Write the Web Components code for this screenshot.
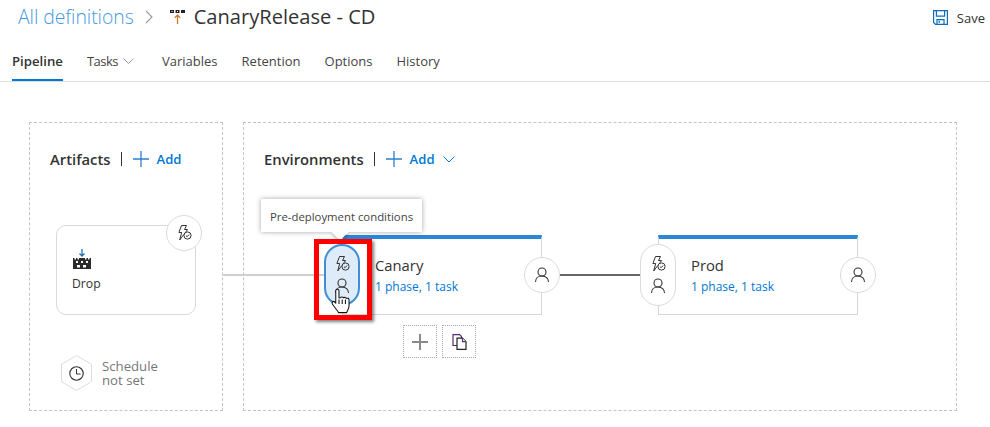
<!DOCTYPE html>
<html>
<head>
<meta charset="utf-8">
<title>CanaryRelease - CD</title>
<style>
  html, body { margin: 0; background: #fff; }
  body { font-family: "Open Sans", "Noto Sans", sans-serif; color: #333; width: 990px; height: 427px; overflow: hidden; }
</style>
</head>
<body>
<release-page></release-page>
<script>
"use strict";
const BOLT = `<svg width="18" height="18" viewBox="0 0 18 18" fill="none" stroke="#333" stroke-width="1"><path d="M6.5 1.5h5l-2 4h3l-1.6 2.4M6.5 1.5l-2.6 7h2.8l-2 7.5 4.2-5.6"/><circle cx="12.5" cy="11.5" r="3.6"/><path d="M10.9 11.6l1.2 1.1 2-2.2"/></svg>`;
const USER = `<svg width="18" height="18" viewBox="0 0 18 18" fill="none" stroke="#333" stroke-width="1.1"><circle cx="9" cy="6" r="4"/><path d="M2.5 16c0-3.6 2.6-6 6.5-6s6.5 2.4 6.5 6"/></svg>`;

class TitleBar extends HTMLElement {
  constructor() {
    super();
    this.attachShadow({ mode: "open" }).innerHTML = `<style>
      :host { display: flex; align-items: center; height: 33px; padding-left: 18px; padding-right: 5px; font-size: 19.4px; font-weight: 300; }
      .crumb { color: #0078d4; opacity: .75; letter-spacing: -.05px; }
      .sep { margin: 0 17px 0 11px; display: flex; }
      .icon { display: flex; margin-right: 9px; }
      .name { color: #333; font-weight: 400; font-size: 20.1px; }
      .save { margin-left: auto; margin-top: 2px; display: flex; align-items: center; gap: 9px; font-size: 13px; font-weight: 400; }
    </style>
    <span class="crumb">All definitions</span>
    <span class="sep"><svg width="8" height="14" viewBox="0 0 8 14" fill="none" stroke="#999" stroke-width="1.1"><path d="M1 1l6 6-6 6"/></svg></span>
    <span class="icon"><svg width="15" height="15" viewBox="0 0 15 15"><path fill="#222" d="M0 1h4v3H0zM5.500 1h4v3h-4zM11 1h4v3h-4z"/><path fill="#fff" d="M1.500 2h1v1h-1zM7 2h1v1H7z"/><path fill="none" stroke="#c8792a" stroke-width="1.3" d="M7.500 15V6.500M4.800 8.800l2.700-2.700 2.700 2.700"/></svg></span>
    <span class="name"><slot></slot></span>
    <span class="save"><svg width="15" height="15" viewBox="0 0 15 15" fill="none" stroke="#0a6ebd" stroke-width="1.2"><path d="M.6.6h13.800v13.800H2.600L.6 12.400z"/><path d="M3.400.6v5.600h8.200V.6M4 14.400V9.600h7v4.800M6.200 10.800v2.200"/></svg>Save</span>`;
  }
}

class TabStrip extends HTMLElement {
  constructor() {
    super();
    this.attachShadow({ mode: "open" }).innerHTML = `<style>
      :host { display: flex; height: 49px; border-bottom: 1px solid #dcdcdc; padding-left: 12px; gap: 24px; font-size: 13px; box-sizing: border-box; }
      .tab { height: 48px; box-sizing: border-box; padding-top: 19px; display: flex; gap: 5px; color: #444; white-space: nowrap; }
      .on { font-weight: 600; font-size: 13.2px; color: #333; border-bottom: 2px solid #0078d4; }
      .tasks { letter-spacing: -.5px; margin-right: 4px; }
      svg { margin-top: 6px; }
    </style>
    <span class="tab on">Pipeline</span>
    <span class="tab tasks">Tasks<svg width="11" height="6" viewBox="0 0 11 6" fill="none" stroke="#999"><path d="M.5.5l5 5 5-5"/></svg></span>
    <span class="tab">Variables</span>
    <span class="tab">Retention</span>
    <span class="tab">Options</span>
    <span class="tab">History</span>`;
  }
}

class StagePanel extends HTMLElement {
  constructor() {
    super();
    const label = this.getAttribute("label");
    const chevron = this.hasAttribute("menu")
      ? `<svg class="chev" width="12" height="7" viewBox="0 0 12 7" fill="none" stroke="#0078d4"><path d="M.5.5L6 6l5.500-5.500"/></svg>` : "";
    this.attachShadow({ mode: "open" }).innerHTML = `<style>
      :host { display: block; border: 1px dashed #c4c4c4; box-sizing: border-box; padding: 26px 20px 0; }
      .head { display: flex; align-items: center; height: 20px; font-size: 14.8px; font-weight: 600; color: #333; }
      .bar { width: 1px; height: 14px; background: #333; margin: 0 11px 0 10px; }
      .add { color: #0078d4; margin-left: 8px; font-size: 13.1px; }
      .chev { margin-left: 8px; }
    </style>
    <div class="head">
      <span>${label}</span><span class="bar"></span>
      <svg width="16" height="16" viewBox="0 0 16 16" stroke="#2d7fd3" stroke-width="1.3"><path d="M0 8h16M8 0v16"/></svg>
      <span class="add">Add</span>${chevron}
    </div>`;
  }
}

class RoundButton extends HTMLElement {
  constructor() {
    super();
    this.attachShadow({ mode: "open" }).innerHTML = `<style>
      :host { display: flex; align-items: center; justify-content: center; width: 36px; height: 36px; box-sizing: border-box; border: 1px solid #dadada; border-radius: 50%; background: #fff; }
    </style><slot></slot>`;
  }
}

class ConditionPill extends HTMLElement {
  constructor() {
    super();
    this.attachShadow({ mode: "open" }).innerHTML = `<style>
      :host { display: flex; flex-direction: column; align-items: center; justify-content: center; gap: 4px; width: 36px; height: 62px; box-sizing: border-box; border: 1px solid #dadada; border-radius: 18px; background: #fff; }
      :host([active]) { border: 2px solid #3f8fd6; background: #deecf9; }
      div { height: 18px; }
    </style><div>${BOLT}</div><div>${USER}</div>`;
  }
}

class EnvCard extends HTMLElement {
  constructor() {
    super();
    this.attachShadow({ mode: "open" }).innerHTML = `<style>
      :host { display: block; position: absolute; width: 200px; height: 80px; box-sizing: border-box; border: 1px solid #d6d6d6; border-top: 4px solid #2b88d8; background: #fff; padding: 16px 0 0 32px; }
      .name { font-size: 14.8px; color: #333; line-height: 20px; }
      .link { font-size: 12px; color: #0078d4; line-height: 20px; margin-top: 2px; }
      condition-pill { position: absolute; left: -19px; top: 5px; }
      round-button { position: absolute; right: -19px; top: 18px; }
    </style>
    <condition-pill ${this.hasAttribute("active") ? "active" : ""}></condition-pill>
    <div class="name"><slot></slot></div>
    <div class="link">1 phase, 1 task</div>
    <round-button>${USER}</round-button>`;
  }
}

class ArtifactCard extends HTMLElement {
  constructor() {
    super();
    this.attachShadow({ mode: "open" }).innerHTML = `<style>
      :host { display: block; position: absolute; width: 140px; height: 90px; box-sizing: border-box; border: 1px solid #d9d9d9; border-radius: 10px; background: #fff; padding: 23px 0 0 15px; }
      .icon { display: block; height: 20px; margin-left: 1px; }
      .name { font-size: 12.2px; color: #333; margin-top: 6px; line-height: 18px; }
      round-button { position: absolute; right: -7px; top: -11px; }
    </style>
    <svg class="icon" width="18" height="20" viewBox="0 0 18 20"><path fill="none" stroke="#1f6fb5" stroke-width="1.3" d="M9 0v6.500M6.500 4.500L9 7l2.500-2.500"/><path fill="#2b2b2b" d="M0 9h1.500v1.500H3V9h1.500v1.500H6V9h6v1.500h1.500V9H15v1.500h1.500V9H18v11H0z"/><path fill="#fff" d="M3 12h2v2H3zM8 12h2v2H8zM13 12h2v2h-2zM4 16h3v2.500H4zM10 16h3v2.500h-3z"/></svg>
    <div class="name"><slot></slot></div>
    <round-button>${BOLT}</round-button>`;
  }
}

class ScheduleBadge extends HTMLElement {
  constructor() {
    super();
    this.attachShadow({ mode: "open" }).innerHTML = `<style>
      :host { display: flex; align-items: center; gap: 10px; position: absolute; font-size: 13.2px; line-height: 14px; color: #777; }
      svg { display: block; }
    </style>
    <svg width="31" height="36" viewBox="0 0 31 36" fill="none"><path stroke="#dcdcdc" d="M15.500.600l15 8.700v17.400l-15 8.700-15-8.700V9.300z"/><circle cx="15.500" cy="18.500" r="6.700" stroke="#333" stroke-width="1.100"/><path stroke="#333" d="M15.500 14v5h4"/></svg>
    <span><slot></slot></span>`;
  }
}

class ToolTip extends HTMLElement {
  constructor() {
    super();
    this.attachShadow({ mode: "open" }).innerHTML = `<style>
      :host { display: block; position: absolute; height: 33px; box-sizing: border-box; padding: 0 9px; background: #fff; font-size: 11.350px; line-height: 35px; color: #444; box-shadow: 0 0 5px rgba(0,0,0,.35); white-space: nowrap; }
      .beak { position: absolute; left: 73px; top: 27px; width: 12px; height: 12px; background: #fff; transform: rotate(45deg); box-shadow: 2px 2px 3px rgba(0,0,0,.2); }
      .text { position: relative; }
    </style><span class="beak"></span><span class="text"><slot></slot></span>`;
  }
}

class ActionTile extends HTMLElement {
  constructor() {
    super();
    this.attachShadow({ mode: "open" }).innerHTML = `<style>
      :host { display: flex; align-items: center; justify-content: center; width: 34px; height: 33px; box-sizing: border-box; border: 1px dotted #aaa; }
    </style><slot></slot>`;
  }
}

class PipelineCanvas extends HTMLElement {
  constructor() {
    super();
    this.attachShadow({ mode: "open" }).innerHTML = `<style>
      :host { display: grid; grid-template-columns: 194px 714px; column-gap: 20px; position: relative; padding: 40px 33px 0 29px; height: 289px; }
      .line { position: absolute; height: 2px; }
      .tiles { position: absolute; left: 403px; top: 243px; display: flex; gap: 5px; }
      .mark { position: absolute; left: 314px; top: 157px; width: 58px; height: 81px; box-sizing: border-box; border: 5px solid #f00; box-shadow: 2px 2px 3px rgba(0,0,0,.5); }
      .hand { position: absolute; left: 331px; top: 206px; }
    </style>
    <stage-panel label="Artifacts"></stage-panel>
    <stage-panel label="Environments" menu></stage-panel>

    <span class="line" style="left:222px;top:192px;width:110px;background:#cfcfcf"></span>
    <span class="line" style="left:560px;top:192px;width:82px;background:#666"></span>

    <artifact-card style="left:56px;top:143px">Drop</artifact-card>
    <schedule-badge style="left:61px;top:273px">Schedule<br>not set</schedule-badge>

    <env-card active style="left:342px;top:153px">Canary</env-card>
    <env-card style="left:658px;top:153px">Prod</env-card>

    <tool-tip style="left:261px;top:117px">Pre-deployment conditions</tool-tip>

    <div class="tiles">
      <action-tile><svg width="16" height="16" viewBox="0 0 16 16" stroke-width="2"><path stroke="#8a8a8a" d="M0 8h16"/><path stroke="#8a8a8a" d="M8 0v16"/></svg></action-tile>
      <action-tile><svg width="15" height="16" viewBox="0 0 15 16" fill="#fff" stroke="#5a2a7a" stroke-width="1.200"><path d="M1 .6h6.500l2 2V11.500H1z"/><path stroke="#222" d="M5 4.200h5.500l3.500 3.500v7.700H5z"/><path d="M10.500 4.200v3.500H14"/></svg></action-tile>
    </div>

    <div class="mark"></div>
    <svg class="hand" width="19" height="25.600" viewBox="0 0 20 27" fill="#fff" stroke="#111" stroke-width="1.100" stroke-linejoin="round"><path d="M5 15V3a1.700 1.700 0 0 1 3.400 0v7.500l1.600-.3c.3-1 2.700-1.200 3.200.2 .8-.9 2.700-.6 3 .6 1-.6 2.800-.2 2.800 1.500V19c0 3-1.500 4-2.500 7H8c-1-2-3-4-5.500-7.500C1 16.500.6 15 2 14.300c1-.5 2 .2 3 1.700z"/><path d="M8.400 12v5M11.800 12v5M15.200 12v5" fill="none"/></svg>`;
  }
}

class ReleasePage extends HTMLElement {
  constructor() {
    super();
    this.attachShadow({ mode: "open" }).innerHTML = `<style>:host { display: block; }</style>
    <title-bar>CanaryRelease - CD</title-bar>
    <tab-strip></tab-strip>
    <pipeline-canvas></pipeline-canvas>`;
  }
}

customElements.define("title-bar", TitleBar);
customElements.define("tab-strip", TabStrip);
customElements.define("stage-panel", StagePanel);
customElements.define("round-button", RoundButton);
customElements.define("condition-pill", ConditionPill);
customElements.define("env-card", EnvCard);
customElements.define("artifact-card", ArtifactCard);
customElements.define("schedule-badge", ScheduleBadge);
customElements.define("tool-tip", ToolTip);
customElements.define("action-tile", ActionTile);
customElements.define("pipeline-canvas", PipelineCanvas);
customElements.define("release-page", ReleasePage);
</script>
</body>
</html>
